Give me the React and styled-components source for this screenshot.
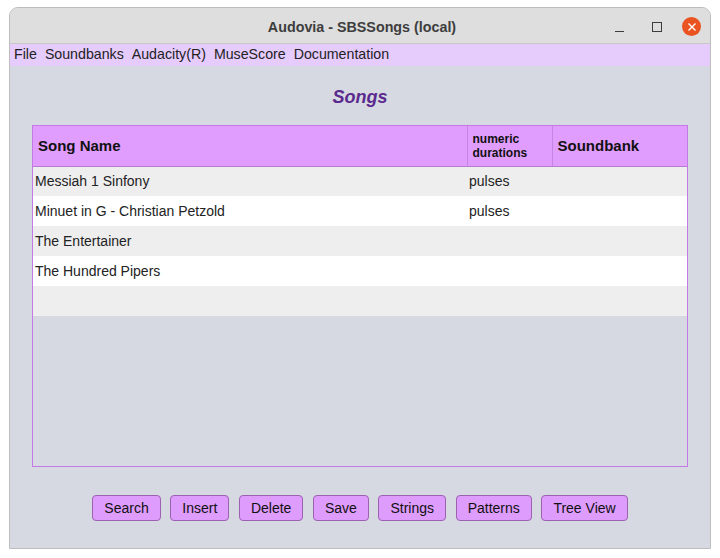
import React from 'react';
import styled, { createGlobalStyle } from 'styled-components';

const Global = createGlobalStyle`
    html, body {
        margin: 0;
        padding: 0;
        background: #ffffff;
    }
    body {
        font-family: 'Liberation Sans', Arial, sans-serif;
    }
`

const songs = [
    { name: 'Messiah 1 Sinfony', durations: 'pulses', soundbank: '' },
    { name: 'Minuet in G - Christian Petzold', durations: 'pulses', soundbank: '' },
    { name: 'The Entertainer', durations: '', soundbank: '' },
    { name: 'The Hundred Pipers', durations: '', soundbank: '' },
    { name: '', durations: '', soundbank: '' },
];

const buttons = ['Search', 'Insert', 'Delete', 'Save', 'Strings', 'Patterns', 'Tree View'];
const menus = ['File', 'Soundbanks', 'Audacity(R)', 'MuseScore', 'Documentation'];

export default function App() {
    return (
        <>
            <Global />
            <Page>
                <Window>
                    <TitleBar>
                        <Title>Audovia - SBSSongs (local)</Title>
                        <Controls>
                            <Minimize />
                            <Maximize />
                            <Close>
                                <svg width="10" height="10" viewBox="0 0 10 10">
                                    <path d="M1.5 1.5 L8.5 8.5 M8.5 1.5 L1.5 8.5" stroke="#fff" strokeWidth="1.4" />
                                </svg>
                            </Close>
                        </Controls>
                    </TitleBar>
                    <MenuBar>
                        {menus.map((m) => (
                            <MenuItem key={m}>{m}</MenuItem>
                        ))}
                    </MenuBar>
                    <Content>
                        <Heading>Songs</Heading>
                        <TableBox>
                            <Table>
                                <colgroup>
                                    <col style={{ width: 434 }} />
                                    <col style={{ width: 85 }} />
                                    <col />
                                </colgroup>
                                <thead>
                                    <tr>
                                        <Th>Song Name</Th>
                                        <Th small>numeric<br />durations</Th>
                                        <Th>Soundbank</Th>
                                    </tr>
                                </thead>
                                <tbody>
                                    {songs.map((s, i) => (
                                        <Tr key={i} odd={i % 2 === 1}>
                                            <Td>{s.name}</Td>
                                            <Td>{s.durations}</Td>
                                            <Td>{s.soundbank}</Td>
                                        </Tr>
                                    ))}
                                </tbody>
                            </Table>
                        </TableBox>
                        <ButtonRow>
                            {buttons.map((b) => (
                                <Button key={b}>{b}</Button>
                            ))}
                        </ButtonRow>
                    </Content>
                </Window>
            </Page>
        </>
    );
}

const Page = styled.div`
    width: 720px;
    height: 558px;
    padding: 7px 9px 0 9px;
    box-sizing: border-box;
`
const Window = styled.div`
    width: 702px;
    height: 542px;
    border: 1px solid #bdbdbd;
    border-radius: 9px 9px 0 0;
    box-sizing: border-box;
    overflow: hidden;
    display: flex;
    flex-direction: column;
    background-color: #d6d9e1;
`
const TitleBar = styled.div`
    height: 36px;
    flex: none;
    box-sizing: border-box;
    padding-top: 2px;
    background-color: #dedede;
    border-bottom: 1px solid #c8c8c8;
    display: flex;
    align-items: center;
    justify-content: center;
    position: relative;
`
const Title = styled.div`
    font-family: 'Liberation Sans', Arial, sans-serif;
    font-weight: bold;
    font-size: 14.3px;
    color: #3d3d3d;
    margin-left: 4px;
`
const Controls = styled.div`
    position: absolute;
    right: 9px;
    top: 9px;
    display: flex;
    align-items: center;
`
const Minimize = styled.div`
    width: 9px;
    height: 1px;
    background: #3c3c3c;
    margin-top: 9px;
    margin-right: 28px;
`
const Maximize = styled.div`
    width: 8px;
    height: 8px;
    border: 1px solid #3c3c3c;
    margin-right: 20px;
`
const Close = styled.div`
    width: 19px;
    height: 19px;
    border-radius: 50%;
    background-color: #e95420;
    display: flex;
    align-items: center;
    justify-content: center;
`
const MenuBar = styled.div`
    height: 22px;
    flex: none;
    background-color: #e6ccfd;
    display: flex;
    align-items: center;
    padding-left: 4px;
    padding-bottom: 2px;
    box-sizing: border-box;
    gap: 8px;
`
const MenuItem = styled.span`
    font-size: 14.2px;
    color: #222;
`
const Content = styled.div`
    flex: 1;
    display: flex;
    flex-direction: column;
    align-items: center;
`
const Heading = styled.div`
    font-size: 18px;
    font-weight: bold;
    font-style: italic;
    color: #5b2a8e;
    margin-top: 21px;
    height: 22px;
`
const TableBox = styled.div`
    margin-top: 16px;
    width: 656px;
    height: 342px;
    box-sizing: border-box;
    border: 1px solid #c37ae6;
`
const Table = styled.table`
    width: 100%;
    border-collapse: collapse;
    table-layout: fixed;
`
const Th = styled.th`
    height: 40px;
    padding: 0 0 0 5px;
    text-align: left;
    background-color: #e19dfd;
    border-right: 1px solid #c486e0;
    border-bottom: 1px solid #b77cd3;
    font-size: ${(p) => (p.small ? '12px' : '15px')};
    line-height: ${(p) => (p.small ? '14px' : '18px')};
    font-weight: bold;
    color: #111;
    box-sizing: border-box;
    &:last-child {
        border-right: none;
    }
`
const Tr = styled.tr`
    background-color: ${(p) => (p.odd ? '#ffffff' : '#eeeeee')};
`
const Td = styled.td`
    height: 30px;
    padding: 0 0 1px 2px;
    box-sizing: border-box;
    font-size: 14px;
    color: #222;
    white-space: nowrap;
    overflow: hidden;
`
const ButtonRow = styled.div`
    display: flex;
    gap: 9.6px;
    margin-top: 28px;
`
const Button = styled.button`
    height: 26px;
    padding: 0 11px;
    background-color: #de9cfd;
    border: 1px solid #9b62b0;
    border-radius: 4px;
    font-family: 'Liberation Sans', Arial, sans-serif;
    font-size: 14px;
    color: #111;
`
